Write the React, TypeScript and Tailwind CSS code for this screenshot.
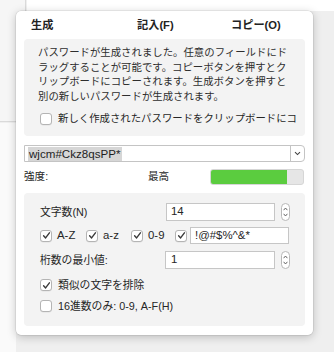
import React from "react";

const Check = ({ checked }: { checked?: boolean }) => (
  <span className="w-[12px] h-[12px] shrink-0 rounded-[3px] border border-[#b4b4b4] bg-white flex items-center justify-center shadow-[0_0.5px_0.5px_rgba(0,0,0,0.08)]">
    {checked && (
      <svg width="9" height="9" viewBox="0 0 9 9">
        <path d="M1.6 4.8 L3.6 6.9 L7.4 1.8" fill="none" stroke="#3a3a3a" strokeWidth="1.4" strokeLinecap="round" strokeLinejoin="round" />
      </svg>
    )}
  </span>
);

const Stepper = () => (
  <span className="w-[9px] h-[18px] rounded-[5px] border border-[#b8b8b8] bg-white flex flex-col items-center justify-center gap-[2px] shrink-0">
    <svg width="5" height="4" viewBox="0 0 5 4">
      <path d="M0.6 3.2 L2.5 1 L4.4 3.2" fill="none" stroke="#555" strokeWidth="0.9" />
    </svg>
    <svg width="5" height="4" viewBox="0 0 5 4">
      <path d="M0.6 0.8 L2.5 3 L4.4 0.8" fill="none" stroke="#555" strokeWidth="0.9" />
    </svg>
  </span>
);

export default function App() {
  return (
    <div className="relative w-[334px] h-[352px] overflow-hidden bg-[#efefef] text-[#262626] font-['Liberation_Sans','Noto_Sans_CJK_JP',sans-serif]">
      {/* background window behind */}
      <div className="absolute left-0 top-0 w-[26px] h-[122px] bg-[#f6f6f6] border-r border-b border-[#dadada]" />
      <div className="absolute left-[27px] top-0 w-[307px] h-[11px] bg-white" />
      <div className="absolute left-0 top-[123px] w-[16px] h-[229px] bg-[#fafafa]" />

      <div className="relative ml-[16px] mt-[11px] w-[297px] h-[324px] bg-white rounded-[5px] shadow-[0_2px_10px_rgba(0,0,0,0.22),0_0_0_0.5px_rgba(0,0,0,0.12)] px-[8px] flex flex-col">
        {/* header */}
        <div className="h-[28px] flex items-center text-[11.2px] font-bold text-[#222]">
          <span className="pl-[7px] w-[113px]">生成</span>
          <span className="w-[94px]">記入(F)</span>
          <span>コピー(O)</span>
        </div>

        {/* info box */}
        <div className="h-[97px] bg-[#f3f3f3] rounded-[4px] pl-[14px] pt-[7px]">
          <div className="text-[10.4px] leading-[14.6px] text-[#2e2e2e] whitespace-nowrap">
            <div>パスワードが生成されました。任意のフィールドにド</div>
            <div>ラッグすることが可能です。コピーボタンを押すとク</div>
            <div>リップボードにコピーされます。生成ボタンを押すと</div>
            <div>別の新しいパスワードが生成されます。</div>
          </div>
          <div className="mt-[7px] flex items-center gap-[6px] pl-[2px] text-[10.4px] whitespace-nowrap">
            <Check />
            <span>新しく作成されたパスワードをクリップボードにコ</span>
          </div>
        </div>

        {/* password field */}
        <div className="mt-[9px] h-[17px] flex border border-[#c4c4c4] rounded-r-[4px] bg-white">
          <div className="flex-1 flex items-center pl-[3px]">
            <span className="bg-[#d6d6d6] px-[1px] text-[11.6px] leading-[14px] text-[#1e1e1e]">wjcm#Ckz8qsPP*</span>
          </div>
          <div className="w-[14px] border-l border-[#c4c4c4] flex items-center justify-center">
            <svg width="7" height="5" viewBox="0 0 7 5">
              <path d="M1 1.2 L3.5 3.6 L6 1.2" fill="none" stroke="#444" strokeWidth="1.1" />
            </svg>
          </div>
        </div>

        {/* strength */}
        <div className="mt-[7px] h-[16px] flex items-center text-[10.6px]">
          <span className="w-[124px]">強度:</span>
          <span className="w-[62px]">最高</span>
          <div className="w-[94px] h-[16px] rounded-[3px] bg-[#e6e6e6] border border-[#d6d6d6] overflow-hidden flex">
            <div className="w-[76px] h-full bg-[#5bcc3f]" />
          </div>
        </div>

        {/* options */}
        <div className="mt-[8px] h-[133px] bg-[#f3f3f3] rounded-[4px] pl-[16px] pt-[10px] flex flex-col text-[10.8px]">
          <div className="h-[18px] flex items-center">
            <span className="w-[126px]">文字数(N)</span>
            <div className="w-[109px] h-[18px] border border-[#c6c6c6] bg-white flex items-center pl-[4px] text-[11.4px]">14</div>
            <span className="ml-[6px]"><Stepper /></span>
          </div>

          <div className="mt-[6px] h-[17px] flex items-center text-[11.4px]">
            <Check checked />
            <span className="ml-[5px] w-[29px]">A-Z</span>
            <Check checked />
            <span className="ml-[5px] w-[28px]">a-z</span>
            <Check checked />
            <span className="ml-[5px] w-[27px]">0-9</span>
            <Check checked />
            <div className="ml-[3px] w-[99px] h-[17px] border border-[#c6c6c6] bg-white flex items-center pl-[4px]">!@#$%^&amp;*</div>
          </div>

          <div className="mt-[7px] h-[18px] flex items-center">
            <span className="w-[125px]">桁数の最小値:</span>
            <div className="w-[110px] h-[18px] border border-[#c6c6c6] bg-white flex items-center pl-[5px] text-[11.4px]">1</div>
            <span className="ml-[6px]"><Stepper /></span>
          </div>

          <div className="mt-[9px] h-[14px] flex items-center gap-[6px]">
            <Check checked />
            <span>類似の文字を排除</span>
          </div>

          <div className="mt-[7px] h-[14px] flex items-center gap-[6px]">
            <Check />
            <span>16進数のみ: 0-9, A-F(H)</span>
          </div>
        </div>
      </div>
    </div>
  );
}
